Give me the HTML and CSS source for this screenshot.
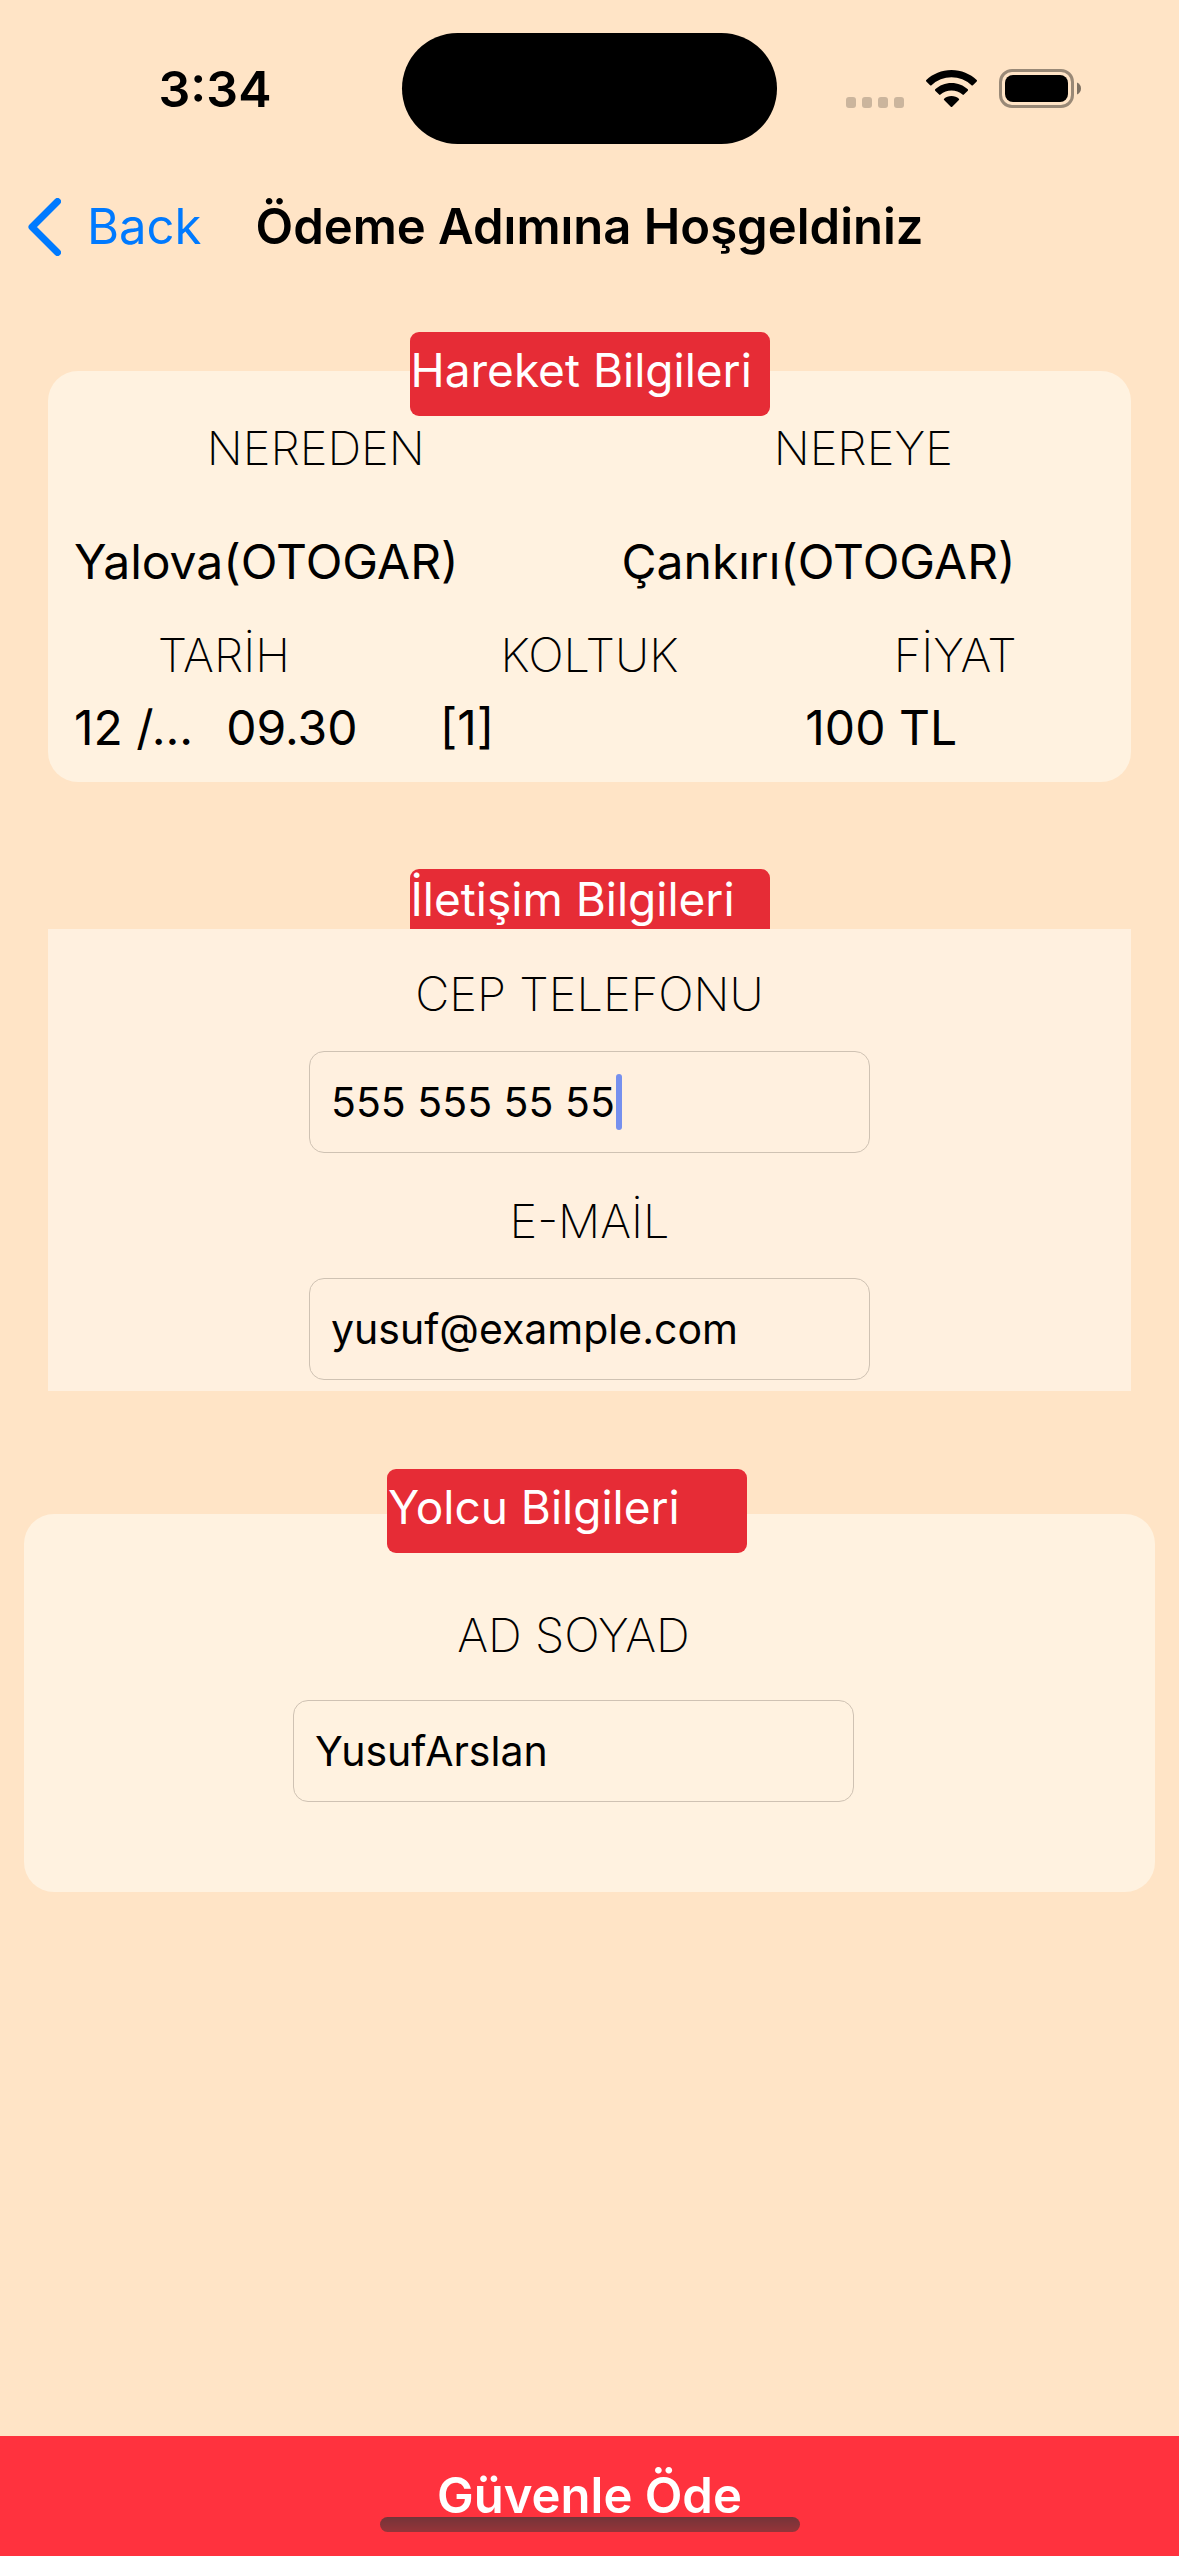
FILE: index.html
```html
<!DOCTYPE html>
<html lang="tr">
<head>
<meta charset="utf-8">
<meta name="viewport" content="width=device-width, initial-scale=1">
<title>Ödeme</title>
<link rel="stylesheet" href="styles.css">
</head>
<body>
<div class="screen">
  <div class="status">
    <div class="status-side"><span class="time">3:34</span></div>
    <div class="island"></div>
    <div class="status-side status-icons">
      <svg class="dots" width="58" height="38" viewBox="0 0 58 38" aria-hidden="true"><rect x="0" y="27" width="10" height="11" rx="3"/><rect x="16" y="27" width="10" height="11" rx="3"/><rect x="32" y="27" width="10" height="11" rx="3"/><rect x="48" y="27" width="10" height="11" rx="3"/></svg>
      <svg class="wifi" width="51" height="38" viewBox="0 0 51 38" aria-hidden="true"><path d="M25.500 0C35.300 0 44.200 3.800 50.700 10.100Q51.300 10.800 50.700 11.500L46.900 15.300Q46.200 15.900 45.500 15.300A29 29 0 0 0 5.500 15.300Q4.800 15.900 4.100 15.300L.3 11.500Q-.3 10.800 .3 10.100C6.800 3.800 15.700 0 25.500 0Z"/><path d="M25.500 13C31.800 13 37.500 15.400 41.800 19.300Q42.400 20 41.800 20.700L37.900 24.500Q37.200 25.200 36.500 24.600A16.500 16.500 0 0 0 14.500 24.600Q13.800 25.200 13.100 24.500L9.200 20.700Q8.600 20 9.200 19.300C13.500 15.400 19.200 13 25.500 13Z"/><path d="M25.500 26C28.400 26 31 27 32.900 28.700Q33.500 29.400 32.900 30L26.200 36.800Q25.500 37.400 24.800 36.800L18.100 30Q17.500 29.400 18.100 28.700C20 27 22.600 26 25.500 26Z"/></svg>
      <svg class="battery" width="83" height="39" viewBox="0 0 83 39" aria-hidden="true"><rect x="1.500" y="1.500" width="72" height="36" rx="11.500" fill="none" stroke="#000" stroke-width="3" opacity=".4"/><rect x="6" y="6" width="63" height="27" rx="8"/><path d="M78 13.500C80.600 14.600 82 16.800 82 19.500S80.600 24.400 78 25.500Z" opacity=".5"/></svg>
    </div>
  </div>

  <header class="nav">
    <a class="back" href="#">
      <svg width="33" height="58" viewBox="0 0 33 58" aria-hidden="true"><path d="M29.500 3.500 4 29 29.500 54.500" fill="none" stroke="currentColor" stroke-width="7" stroke-linecap="round" stroke-linejoin="round"/></svg>
      <span>Back</span>
    </a>
    <h1 class="title">Ödeme Adımına Hoşgeldiniz</h1>
  </header>

  <main class="content">
    <section class="section trip">
      <h2 class="badge">Hareket Bilgileri</h2>
      <div class="card trip-card">
        <dl class="route">
          <div class="cell"><dt class="label">NEREDEN</dt><dd class="value">Yalova(OTOGAR)</dd></div>
          <div class="cell"><dt class="label">NEREYE</dt><dd class="value">Çankırı(OTOGAR)</dd></div>
        </dl>
        <dl class="details">
          <div class="cell"><dt class="label">TARİH</dt><dd class="value when"><span>12 /...</span><span>09.30</span></dd></div>
          <div class="cell"><dt class="label">KOLTUK</dt><dd class="value">[1]</dd></div>
          <div class="cell"><dt class="label">FİYAT</dt><dd class="value">100 TL</dd></div>
        </dl>
      </div>
    </section>

    <section class="section contact">
      <h2 class="badge badge-tab">İletişim Bilgileri</h2>
      <div class="panel">
        <div class="field">
          <label class="label" for="phone">CEP TELEFONU</label>
          <div class="control"><input class="input" id="phone" type="tel" value="555 555 55 55"><span class="caret"></span></div>
        </div>
        <div class="field">
          <label class="label" for="email">E-MAİL</label>
          <div class="control"><input class="input" id="email" type="email" value="yusuf@example.com"></div>
        </div>
      </div>
    </section>

    <section class="section passenger">
      <h2 class="badge">Yolcu Bilgileri</h2>
      <div class="card passenger-card">
        <div class="field roomy">
          <label class="label" for="name">AD SOYAD</label>
          <div class="control"><input class="input" id="name" type="text" value="YusufArslan"></div>
        </div>
      </div>
    </section>
  </main>

  <footer class="footer">
    <button class="pay" type="button">Güvenle Öde</button>
    <div class="home-bar"></div>
  </footer>
</div>
</body>
</html>
```

FILE: styles.css
```css
* { box-sizing: border-box; }

body {
  margin: 0;
  background: #ffe4c6;
  color: #000;
  font-family: Inter, "Liberation Sans", sans-serif;
}

h1, h2, dl, dd { margin: 0; }

.screen {
  display: flex;
  flex-direction: column;
  min-height: 100vh;
}

/* status bar */
.status {
  display: grid;
  grid-template-columns: 1fr 375px 1fr;
  align-items: center;
  height: 177px;
}
.status-side {
  display: flex;
  justify-content: center;
  padding-left: 28px;
}
.time { font-size: 50px; line-height: 60px; font-weight: 600; }
.island {
  height: 111px;
  border-radius: 56px;
  background: #000;
}
.status-icons {
  justify-content: flex-end;
  align-items: center;
  gap: 22px;
  padding: 0 97px 0 0;
}
.dots { opacity: .2; }

/* navigation */
.nav {
  display: flex;
  align-items: center;
  gap: 54px;
  height: 100px;
  padding: 0 28px;
}
.back {
  display: flex;
  align-items: center;
  gap: 26px;
  color: #007aff;
  font-size: 49px;
  line-height: 60px;
  text-decoration: none;
}
.title { font-size: 49px; line-height: 60px; font-weight: 600; white-space: nowrap; }

/* sections */
.content { padding: 55px 24px 80px; }
.section {
  display: flex;
  flex-direction: column;
  align-items: center;
}
.trip, .contact { padding: 0 24px; }
.contact { margin-top: 87px; }
.passenger { margin-top: 78px; }

.badge {
  position: relative;
  width: 360px;
  height: 84px;
  padding-left: 1px;
  border-radius: 9px;
  background: #e62c36;
  color: #fff;
  font-size: 46px;
  line-height: 76px;
  font-weight: 400;
  white-space: nowrap;
}
.trip .badge { margin-bottom: -45px; }
.passenger .badge { margin: 0 45px -39px 0; }
.badge-tab {
  height: 60px;
  border-radius: 9px 9px 0 0;
  line-height: 60px;
}

.card, .panel { width: 100%; }
.card { border-radius: 30px; background: #fff2e0; }
.panel { background: #fff0df; }

.label {
  font-size: 47px;
  line-height: 60px;
  font-weight: 200;
  text-align: center;
}
.value {
  font-size: 48px;
  line-height: 60px;
  white-space: nowrap;
}

/* trip summary */
.trip-card {
  display: flex;
  flex-direction: column;
  gap: 33px;
  padding: 47px 26px 24px;
}
.route, .details { display: grid; }
.route { grid-template-columns: 1fr 1fr; column-gap: 64px; }
.details { grid-template-columns: 1fr 1fr 1fr; column-gap: 66px; }
.cell { display: flex; flex-direction: column; min-width: 0; }
.route .cell { gap: 54px; }
.details .cell { gap: 13px; }
.when { display: flex; gap: 33px; }

/* forms */
.panel {
  display: flex;
  flex-direction: column;
  gap: 38px;
  padding: 35px 0 11px;
}
.passenger-card { padding: 91px 32px 90px 0; }
.field {
  display: flex;
  flex-direction: column;
  align-items: center;
  gap: 27px;
}
.field.roomy { gap: 35px; }
.control { position: relative; width: 561px; }
.input {
  display: block;
  width: 100%;
  height: 102px;
  padding: 0 21px;
  border: 1px solid #cfc2b3;
  border-radius: 15px;
  background: transparent;
  color: #000;
  font: 400 41px/50px Inter, "Liberation Sans", sans-serif;
  outline: 0;
}
.caret {
  position: absolute;
  left: 307px;
  top: 23px;
  width: 6px;
  height: 56px;
  border-radius: 3px;
  background: #7690ee;
}

/* pay button */
.footer { position: relative; margin-top: auto; }
.pay {
  display: block;
  width: 100%;
  height: 120px;
  padding: 0;
  border: 0;
  background: #ff323e;
  color: #fff;
  font: 600 49px/120px Inter, "Liberation Sans", sans-serif;
}
.home-bar {
  position: absolute;
  left: 50%;
  bottom: 24px;
  width: 420px;
  height: 15px;
  margin-left: -210px;
  border-radius: 8px;
  background: linear-gradient(#743439, #963439);
}
```
